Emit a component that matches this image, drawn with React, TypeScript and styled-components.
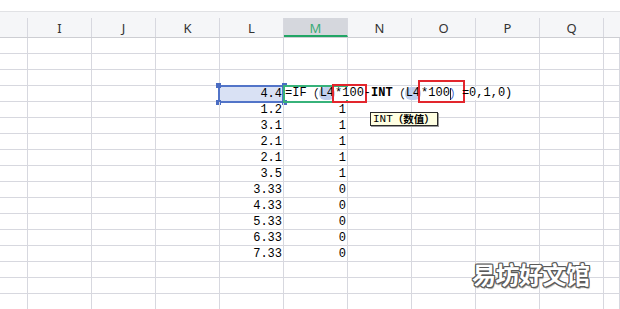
import React from 'react';
import styled, { createGlobalStyle, css } from 'styled-components';

const GlobalStyle = createGlobalStyle`
	html, body {
		margin: 0;
		padding: 0;
		background: #fff;
		overflow: hidden;
	}
	#root {
		width: 620px;
		height: 309px;
	}
`;

const GRID = '#d7d8df';
const COLUMNS = ['I', 'J', 'K', 'L', 'M', 'N', 'O', 'P', 'Q'];
const TEMPLATE = '28px repeat(9, 64px) 1fr';

const Sheet = styled.div`
	position: relative;
	width: 620px;
	height: 309px;
	overflow: hidden;
	box-sizing: border-box;
	padding-top: 11px;
	background: #fff;
	font-family: "Liberation Mono", "Noto Sans CJK SC", monospace;
`;

const HeaderRow = styled.div`
	display: grid;
	grid-template-columns: ${TEMPLATE};
	height: 27px;
	box-sizing: border-box;
	border-top: 1px solid #e1e2e5;
	border-bottom: 1px solid #cdced3;
	background: #f5f6f8;
`;

const HeaderCell = styled.div`
	display: flex;
	align-items: flex-end;
`;

const HeaderLabel = styled.div<{ $active?: boolean }>`
	flex: 1;
	height: 19px;
	box-sizing: border-box;
	display: flex;
	align-items: center;
	justify-content: center;
	border-right: 1px solid ${GRID};
	font-family: "Noto Sans", "Noto Sans CJK SC", sans-serif;
	font-size: 13px;
	color: #333;

	${props => props.$active && css`
		background: #d5d7dd;
		color: #3aab77;
		border-bottom: 2px solid #21a565;
		padding-top: 2px;
	`}
`;

const Row = styled.div`
	display: grid;
	grid-template-columns: ${TEMPLATE};
	height: 16px;
	box-sizing: border-box;
	border-bottom: 1px solid ${GRID};
`;

const Cell = styled.div<{ $selected?: boolean; $editing?: boolean }>`
	position: relative;
	border-right: 1px solid ${GRID};
	padding-right: 1px;
	font-size: 12px;
	line-height: 16px;
	text-align: right;
	white-space: nowrap;
	color: #000;

	${props => props.$selected && css`
		background: #d9e1f4;

		&::before {
			content: '';
			position: absolute;
			inset: -1px -1px -1px -2px;
			border: 2px solid #5274c8;
			pointer-events: none;
		}
	`}

	${props => props.$editing && css`
		&::before {
			content: '';
			position: absolute;
			inset: -1px -1px -1px -1px;
			border: 2px solid #37b27a;
			z-index: 1;
			pointer-events: none;
		}
	`}
`;

const Handle = styled.span<{ $x: 'left' | 'right'; $y: 'top' | 'bottom' }>`
	position: absolute;
	width: 5px;
	height: 5px;
	background: #4a6cc2;
	${props => props.$x}: -4px;
	${props => props.$y}: -3px;
`;

const Formula = styled.div`
	position: absolute;
	left: 1px;
	top: 1px;
	z-index: 2;
	height: 13px;
	display: flex;
	align-items: center;
	padding-right: 2px;
	background: #fff;
	color: #000;
	font-size: 12px;
	line-height: 13px;
`;

const Wide = styled.span<{ $blue?: boolean }>`
	font-family: "Noto Sans CJK SC", sans-serif;
	line-height: 13px;
	color: ${props => props.$blue ? '#3560d0' : '#000'};
`;

const Ref = styled.span`
	background: #c0cfee;
	border-radius: 6px;
	padding: 0 1px;
	line-height: 13px;
`;

const Bold = styled.span`
	font-weight: bold;
`;

const Marked = styled.span<{ $tall?: boolean }>`
	display: inline-flex;
	align-items: center;
	height: 13px;
	outline: 2px solid #e2262d;
	outline-offset: 1px;
	${props => props.$tall && css`
		height: 17px;
		padding-top: 4px;
		box-sizing: border-box;
		margin-top: -4px;
	`}
`;

const Caret = styled.span`
	display: inline-block;
	width: 1px;
	height: 12px;
	margin-right: -1px;
	background: #222;
`;

const Tooltip = styled.div`
	position: absolute;
	left: 370px;
	top: 112px;
	height: 14px;
	box-sizing: border-box;
	display: flex;
	align-items: center;
	padding: 0 2px;
	border: 1px solid #2a2a2a;
	background: #ffffe2;
	box-shadow: 1px 1px 0 #9a9a9a;
	font-size: 11px;
	line-height: 12px;
	color: #000;
	white-space: nowrap;
	z-index: 3;
`;

const TipArg = styled.span`
	font-family: "Noto Sans CJK SC", sans-serif;
	font-weight: bold;
	font-size: 10.5px;
	line-height: 12px;
`;

const Watermark = styled.div`
	position: absolute;
	left: 472px;
	top: 259px;
	font-family: "Noto Sans CJK SC", sans-serif;
	font-weight: bold;
	font-size: 24px;
	line-height: 30px;
	letter-spacing: -0.5px;
	color: #fff;
	text-shadow:
		1px 0 0 #5a5a5a, -1px 0 0 #5a5a5a, 0 1px 0 #5a5a5a, 0 -1px 0 #5a5a5a,
		1px 1px 0 #5a5a5a, -1px -1px 0 #5a5a5a, 1px -1px 0 #5a5a5a, -1px 1px 0 #5a5a5a,
		1px 2px 1px #9a9a9a;
`;

const L_VALUES: Record<number, string> = {
	4: '4.4', 5: '1.2', 6: '3.1', 7: '2.1', 8: '2.1', 9: '3.5',
	10: '3.33', 11: '4.33', 12: '5.33', 13: '6.33', 14: '7.33',
};

const M_VALUES: Record<number, string> = {
	5: '1', 6: '1', 7: '1', 8: '1', 9: '1',
	10: '0', 11: '0', 12: '0', 13: '0', 14: '0',
};

const FormulaEditor = () => (
	<Formula>
		<span>=IF</span><Wide>（</Wide><Ref>L4</Ref><Marked>*100</Marked><span>-</span><Bold>INT</Bold><Wide>（</Wide><Ref>L4</Ref><Marked $tall>*100<Caret /><Wide $blue>）</Wide></Marked><span>=0,1,0)</span>
	</Formula>
);

const rows = Array.from({ length: 17 }, (_, i) => i + 1);

const App = () => {
	return (
		<>
			<GlobalStyle />
			<Sheet>
				<HeaderRow>
					<HeaderCell><HeaderLabel /></HeaderCell>
					{COLUMNS.map(col => (
						<HeaderCell key={`head_${col}`}>
							<HeaderLabel $active={col === 'M'}>{col}</HeaderLabel>
						</HeaderCell>
					))}
					<HeaderCell />
				</HeaderRow>
				{rows.map(r => (
					<Row key={`row_${r}`}>
						<Cell />
						{COLUMNS.map(col => {
							const selected = col === 'L' && r === 4;
							const editing = col === 'M' && r === 4;
							return (
								<Cell key={`cell_${col}${r}`} $selected={selected} $editing={editing}>
									{col === 'L' && L_VALUES[r]}
									{col === 'M' && M_VALUES[r]}
									{selected && (
										<>
											<Handle $x="left" $y="top" />
											<Handle $x="right" $y="top" />
											<Handle $x="left" $y="bottom" />
											<Handle $x="right" $y="bottom" />
										</>
									)}
									{editing && <FormulaEditor />}
								</Cell>
							);
						})}
						<Cell />
					</Row>
				))}
				<Tooltip>INT<TipArg>（数值）</TipArg></Tooltip>
				<Watermark>易坊好文馆</Watermark>
			</Sheet>
		</>
	);
};

export default App;
